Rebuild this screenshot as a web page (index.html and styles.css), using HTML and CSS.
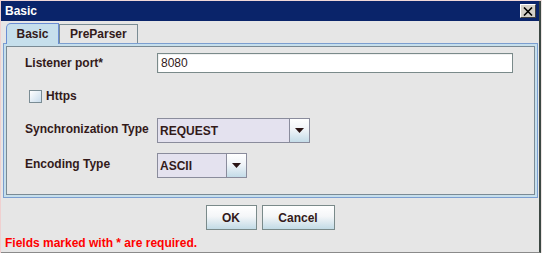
FILE: index.html
```html
<!DOCTYPE html>
<html>
<head>
<meta charset="utf-8">
<link rel="stylesheet" href="styles.css">
</head>
<body>
<div class="outer">
  <div class="window">
    <div class="titlebar">
      <span class="title">Basic</span>
      <span class="close">
        <svg width="10" height="9" viewBox="0 0 10 9"><path d="M1 0.5 L9 8.5 M9 0.5 L1 8.5" stroke="#000" stroke-width="1.6"/></svg>
      </span>
    </div>
    <div class="tabs">
      <div class="tab selected">Basic</div>
      <div class="tab">PreParser</div>
    </div>
    <div class="panel">
      <div class="panel-inner">
        <div class="row row-port">
          <span class="label">Listener port*</span>
          <div class="field">8080</div>
        </div>
        <div class="row row-https">
          <span class="checkbox"></span>
          <span class="label">Https</span>
        </div>
        <div class="row row-sync">
          <span class="label">Synchronization Type</span>
          <div class="combo combo-sync">
            <span class="combo-text">REQUEST</span>
            <span class="arrow"><svg width="9" height="5" viewBox="0 0 9 5"><path d="M0 0 H9 L4.5 5 Z" fill="#2a1414"/></svg></span>
          </div>
        </div>
        <div class="row row-enc">
          <span class="label">Encoding Type</span>
          <div class="combo combo-enc">
            <span class="combo-text">ASCII</span>
            <span class="arrow"><svg width="9" height="5" viewBox="0 0 9 5"><path d="M0 0 H9 L4.5 5 Z" fill="#2a1414"/></svg></span>
          </div>
        </div>
      </div>
    </div>
    <div class="buttons">
      <button class="btn btn-ok">OK</button>
      <button class="btn btn-cancel">Cancel</button>
    </div>
    <div class="footer">Fields marked with * are required.</div>
  </div>
</div>
</body>
</html>
```

FILE: styles.css
```css
* { box-sizing: border-box; }
html, body { margin: 0; padding: 0; }
body {
  width: 542px;
  height: 253px;
  overflow: hidden;
  font-family: "Liberation Sans", Arial, sans-serif;
  font-size: 12px;
  font-weight: bold;
  color: #331a1a;
  background: #e6e6e6;
}
.outer {
  width: 542px;
  height: 253px;
  border-right: 1px solid #ece4e4;
  border-top: 1px solid #f0d8d8;
  border-left: 1px solid #f0d0d0;
}
.window {
  height: 252px;
  border-right: 2px solid #3c4842;
  border-bottom: 1px solid #8a8a8a;
  background: #e6e6e6;
  display: flex;
  flex-direction: column;
}
.titlebar {
  height: 20px;
  background: #0a246a;
  display: flex;
  align-items: center;
  justify-content: space-between;
  padding: 0 3px 0 4px;
}
.title {
  color: #fff;
  font-size: 12px;
  font-weight: bold;
}
.close {
  width: 16px;
  height: 14px;
  background: #d4d0c8;
  border-top: 1px solid #fff;
  border-left: 1px solid #fff;
  border-right: 1px solid #404040;
  border-bottom: 1px solid #404040;
  display: flex;
  align-items: center;
  justify-content: center;
}
.tabs {
  display: flex;
  align-items: flex-end;
  height: 22px;
  padding-left: 5px;
  position: relative;
  z-index: 1;
}
.tab {
  height: 19px;
  padding: 0 10px;
  display: flex;
  align-items: center;
  font-size: 12px;
  border: 1px solid #7a8c94;
  border-bottom: none;
  background: #e6e6e6;
}
.tab.selected {
  height: 21px;
  width: 53px;
  justify-content: center;
  background: #c6dfec;
  border-color: #6a8ed4;
  border-top-left-radius: 5px;
  margin-bottom: -1px;
  padding: 0 0 1px 0;
}
.panel {
  margin-left: 2px;
  width: 535px;
  height: 155px;
  border: 1px solid #7b9ed0;
  background: #c6dfec;
  padding: 2px;
}
.panel-inner {
  height: 100%;
  border: 1px solid #7a8a94;
  background: #e6e6e6;
  padding: 6px 0 0 18px;
  display: flex;
  flex-direction: column;
}
.row {
  display: flex;
  align-items: center;
}
.row .label {
  width: 132px;
  flex: none;
}
.field {
  width: 356px;
  height: 20px;
  background: #fff;
  border: 1px solid #7a8a8a;
  box-shadow: inset 1px 1px 0 #f0f0f0;
  font-weight: normal;
  font-size: 12px;
  color: #331a1a;
  padding-left: 3px;
  display: flex;
  align-items: center;
}
.row-https {
  margin-top: 16px;
  padding-left: 4px;
}
.row-https .label { width: auto; margin-left: 4px; }
.checkbox {
  width: 13px;
  height: 13px;
  border: 1px solid #7a8c94;
  background: linear-gradient(to bottom right, #ffffff, #c8dcec);
}
.row-sync { margin-top: 15px; }
.row-sync .label { margin-top: -3px; }
.row-enc { margin-top: 10px; }
.row-enc .label { margin-top: -3px; }
.combo {
  height: 25px;
  display: flex;
  border: 1px solid #8a8c9c;
  background: #e4e2ef;
}
.combo-sync { width: 153px; }
.combo-enc { width: 90px; }
.combo-text {
  flex: 1;
  display: flex;
  align-items: center;
  padding-left: 2px;
  border-right: 1px solid #8a8c9c;
}
.arrow {
  width: 19px;
  display: flex;
  align-items: center;
  justify-content: center;
  background: linear-gradient(to bottom, #ffffff 0%, #f0f4f8 45%, #c4dce8 100%);
}
.buttons {
  display: flex;
  justify-content: center;
  gap: 5px;
  margin-top: 7px;
}
.btn {
  height: 25px;
  font-family: "Liberation Sans", Arial, sans-serif;
  font-size: 12px;
  font-weight: bold;
  color: #331a1a;
  border: 1px solid #7a8a8a;
  background: linear-gradient(to bottom, #ffffff 0%, #f4f6f8 45%, #c2dbe6 100%);
  padding: 0;
  margin: 0;
}
.btn-ok { width: 51px; }
.btn-cancel { width: 73px; }
.footer {
  margin-top: 6px;
  padding-left: 4px;
  color: #ff0000;
  font-size: 12px;
  font-weight: bold;
}
```
